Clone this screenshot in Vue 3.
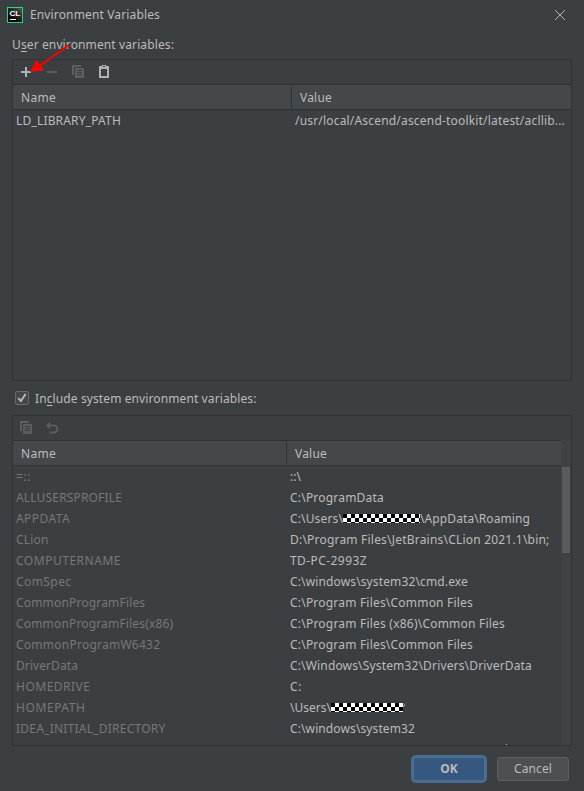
<script setup>
const fitWidth = (el, { value }) => {
  if (!value) return
  el.style.letterSpacing = '0px'
  const natural = el.getBoundingClientRect().width
  el.style.letterSpacing = (value - natural) / el.textContent.length + 'px'
}
const vFit = { mounted: fitWidth }

const rows = [
  { name: '=::', nw: 15, parts: [['::\\', 11]] },
  { name: 'ALLUSERSPROFILE', nw: 106, parts: [['C:\\ProgramData', 94]] },
  { name: 'APPDATA', nw: 54, parts: [['C:\\Users\\', 53], [null, 77], ['\\AppData\\Roaming', 110]] },
  { name: 'CLion', nw: 32.5, parts: [['D:\\Program Files\\JetBrains\\CLion 2021.1\\bin;', 259.5]] },
  { name: 'COMPUTERNAME', nw: 105, parts: [['TD-PC-2993Z', 77]] },
  { name: 'ComSpec', nw: 55.5, parts: [['C:\\windows\\system32\\cmd.exe', 178]] },
  { name: 'CommonProgramFiles', nw: 129.3, parts: [['C:\\Program Files\\Common Files', 183]] },
  { name: 'CommonProgramFiles(x86)', nw: 157.3, parts: [['C:\\Program Files (x86)\\Common Files', 215]] },
  { name: 'CommonProgramW6432', nw: 144.3, parts: [['C:\\Program Files\\Common Files', 183]] },
  { name: 'DriverData', nw: 62, parts: [['C:\\Windows\\System32\\Drivers\\DriverData', 242]] },
  { name: 'HOMEDRIVE', nw: 74.5, parts: [['C:', 12]] },
  { name: 'HOMEPATH', nw: 69.5, parts: [['\\Users\\', 41], [null, 72]], tail: true },
  { name: 'IDEA_INITIAL_DIRECTORY', nw: 149.5, parts: [['C:\\windows\\system32', 125]] },
]
</script>

<template>
  <div class="dialog">
    <header class="titlebar">
      <svg class="logo" width="16" height="16" viewBox="0 0 16 16">
        <defs>
          <linearGradient id="logoFill" x1="1" y1="0" x2="0.3" y2="0.8">
            <stop offset="0" stop-color="#555" />
            <stop offset="1" stop-color="#050505" />
          </linearGradient>
        </defs>
        <rect width="16" height="16" fill="#21d789" />
        <rect x="1" y="1" width="14" height="14" fill="url(#logoFill)" />
        <text x="2.4" y="8.6" textLength="10.8" lengthAdjust="spacingAndGlyphs" class="logo-text">CL</text>
        <rect x="3" y="12" width="6" height="1" fill="#fff" />
      </svg>
      <h1><span v-fit="130">Environment Variables</span></h1>
      <svg class="close" width="10" height="10" viewBox="0 0 10 10"><path d="M0 0L10 10M10 0L0 10" stroke="#b4b6b7" fill="none" /></svg>
    </header>

    <div class="label"><span v-fit="162">U<u>s</u>er environment variables:</span></div>

    <section class="panel user">
      <div class="toolbar">
        <svg width="16" height="16" viewBox="0 0 16 16"><path d="M7 3h2v4h4v2H9v4H7V9H3V7h4z" fill="#afb1b3" /></svg>
        <svg width="16" height="16" viewBox="0 0 16 16"><path d="M3 7h10v2H3z" fill="#5b5d5e" /></svg>
        <svg width="16" height="16" viewBox="0 0 16 16"><path d="M2 1h9v2H4v8H2zM5 4h9v10H5zM7 6v1h5V6zM7 8v1h5V8zM7 10v1h5v-1z" fill="#5b5d5e" fill-rule="evenodd" /></svg>
        <svg width="16" height="16" viewBox="0 0 16 16"><path d="M3 2h3V1h4v1h3v12H3zM5 5v7h6V5zM7 2v1h2V2z" fill="#afb1b3" fill-rule="evenodd" /></svg>
      </div>
      <div class="thead">
        <div class="th"><span v-fit="35">Name</span></div>
        <div class="th split"><span v-fit="32">Value</span></div>
      </div>
      <div class="row">
        <div class="td"><span v-fit="105">LD_LIBRARY_PATH</span></div>
        <div class="td"><span v-fit="270">/usr/local/Ascend/ascend-toolkit/latest/acllib...</span></div>
      </div>
    </section>

    <div class="include">
      <span class="checkbox">
        <svg width="12" height="12" viewBox="0 0 12 12"><path d="M2.2 6.2L4.9 9L9.6 2" stroke="#bcbcbc" stroke-width="1.9" fill="none" /></svg>
      </span>
      <span class="include-text"><span v-fit="221.5">In<u>c</u>lude system environment variables:</span></span>
    </div>

    <section class="panel system">
      <div class="toolbar">
        <svg width="16" height="16" viewBox="0 0 16 16"><path d="M2 1h9v2H4v8H2zM5 4h9v10H5zM7 6v1h5V6zM7 8v1h5V8zM7 10v1h5v-1z" fill="#5b5d5e" fill-rule="evenodd" /></svg>
        <svg width="16" height="16" viewBox="0 0 16 16"><path d="M2 5.5L6 1.8V9.2z" fill="#5b5d5e" /><path d="M5 5.5h5a3.5 3.5 0 0 1 0 7H5.5" stroke="#5b5d5e" stroke-width="2" fill="none" /></svg>
      </div>
      <div class="body">
        <div class="table">
          <div class="thead">
            <div class="th"><span v-fit="35">Name</span></div>
            <div class="th split"><span v-fit="32">Value</span></div>
          </div>
          <div v-for="row in rows" :key="row.name" class="row">
            <div class="td muted"><span v-fit="row.nw">{{ row.name }}</span></div>
            <div class="td">
              <template v-for="(part, i) in row.parts" :key="i">
                <span v-if="part[0]" v-fit="part[1]">{{ part[0] }}</span>
                <i v-else class="redacted" :style="{ width: part[1] + 'px' }"></i>
              </template>
              <svg v-if="row.tail" width="3" height="10" viewBox="0 0 3 10"><path d="M2 0.5L0.7 4" stroke="#a0a0a0" fill="none" /></svg>
            </div>
          </div>
        </div>
        <div class="scrollbar"><div class="thumb"></div></div>
      </div>
      <i class="clipped"></i>
    </section>

    <footer class="actions">
      <button class="ok">OK</button>
      <button class="cancel"><span v-fit="38">Cancel</span></button>
    </footer>

    <svg class="arrow" width="50" height="40" viewBox="0 0 50 40">
      <path d="M43 4L12 26" stroke="#f00" stroke-width="2" />
      <path d="M4 31L10.5 18.8L18 29.2z" fill="#f00" />
    </svg>
  </div>
</template>

<style>
body { background: #3c3f41; overflow: hidden; }
</style>
<style scoped>
* { box-sizing: border-box; }
.dialog {
  position: relative; width: 584px; height: 791px; padding: 0 12px;
  display: flex; flex-direction: column; overflow: hidden;
  background: #3c3f41; color: #bbb; white-space: pre;
  font: 12px/20px "Noto Sans", sans-serif;
}
.titlebar { display: flex; align-items: center; height: 29px; margin: 0 7px 0 -5px; flex: none; }
h1 { margin: 0 0 0 7px; font-size: 12px; font-weight: 400; flex: 1; }
.logo-text { font: bold 8px "Liberation Sans", sans-serif; fill: #fff; }
.label { height: 30px; padding-top: 6px; flex: none; }
u { text-decoration-thickness: 1px; text-underline-offset: 2px; }
.panel { position: relative; width: 560px; border: 1px solid #323232; flex: none; display: flex; flex-direction: column; overflow: hidden; }
.user { height: 322px; }
.system { height: 331px; }
.toolbar { height: 24px; padding-left: 5px; display: flex; align-items: center; gap: 10px; flex: none; }
.thead, .row { display: grid; grid-template-columns: 274px 1fr; }
.system .thead { grid-template-columns: 273px 1fr; }
.user .thead, .user .row { grid-template-columns: 278px 1fr; }
.thead { height: 26px; border: solid #323232; border-width: 1px 0; background: #45484a; flex: none; }
.th { padding-left: 8px; height: 22px; line-height: 24px; margin-top: 1px; }
.split { border-left: 1px solid #323232; }
.row { height: 21px; line-height: 21px; }
.td { padding-left: 3px; display: flex; align-items: center; }
.user .td + .td { padding-left: 4px; }
.muted { color: #777; }
.redacted { height: 9px; background: conic-gradient(#fff 25%, #000 0 50%, #fff 0 75%, #000 0) 0 0 / 8px 8px; }
.clipped { position: absolute; left: 493px; bottom: 0; width: 1px; height: 1px; background: #a9b5a0; }
.body { display: flex; flex: 1; min-height: 0; }
.table { flex: 1; }
.scrollbar { width: 10px; padding: 27px 1px 0; background: #3f4244; }
.thumb { height: 86px; background: #595b5d; }
.include { height: 34px; display: flex; align-items: center; gap: 6px; padding-left: 3px; flex: none; }
.include-text { padding-top: 2px; }
.checkbox { width: 14px; height: 14px; border: 1px solid #6b6b6b; border-radius: 2px; background: #43494a; display: flex; }
.actions { display: flex; justify-content: flex-end; align-items: center; gap: 10px; padding: 9px 3px 0 0; }
button { font: 12px/20px "Noto Sans", sans-serif; color: #bbb; height: 24px; width: 72px; padding: 0; border: 1px solid #5e6060; border-radius: 3px; background: #4c5052; }
.ok { width: 76px; height: 28px; border: 2px solid #466d94; border-radius: 5px; background: #365880; font-weight: 700; box-shadow: inset 0 0 0 1px #4c708c; }
.arrow { position: absolute; left: 26px; top: 41px; }
</style>
